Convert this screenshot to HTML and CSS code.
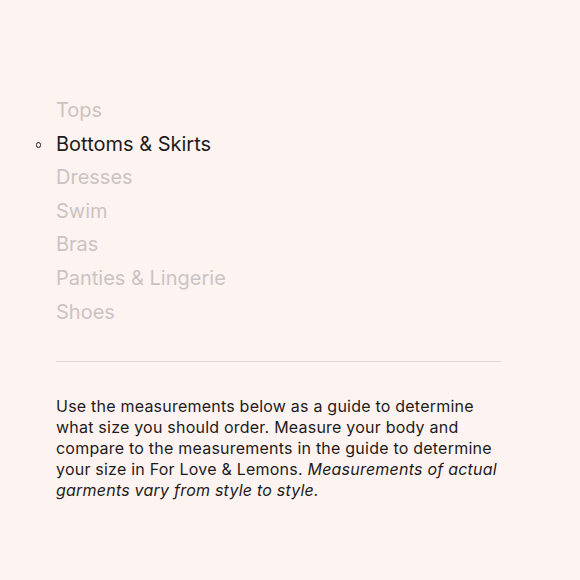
FILE: index.html
```html
<!DOCTYPE html>
<html>
<head>
<meta charset="utf-8">
<link rel="stylesheet" href="styles.css">
</head>
<body>
<div class="page">
  <ul class="cats">
    <li class="cat">Tops</li>
    <li class="cat active">Bottoms &amp; Skirts</li>
    <li class="cat">Dresses</li>
    <li class="cat">Swim</li>
    <li class="cat">Bras</li>
    <li class="cat">Panties &amp; Lingerie</li>
    <li class="cat">Shoes</li>
  </ul>
  <hr class="rule">
  <p class="intro">Use the measurements below as a guide to determine what size you should order. Measure your body and compare to the measurements in the guide to determine your size in For Love &amp; Lemons. <em>Measurements of actual garments vary from style to style.</em></p>
</div>
</body>
</html>
```
FILE: styles.css
```css
html, body {
  margin: 0;
  padding: 0;
  background: #fdf4f2;
}
body {
  font-family: Inter, "Noto Sans", sans-serif;
  color: #1f1b1b;
}
.page {
  width: 445px;
  padding: 94px 0 0 56px;
}
.cats {
  list-style: none;
  margin: 0;
  padding: 0;
}
.cat {
  position: relative;
  font-size: 20px;
  line-height: 33.6px;
  color: #cbc3c2;
}
.cat.active {
  color: #1f1b1b;
}
.cat.active::before {
  content: "";
  position: absolute;
  left: -20.3px;
  top: 14.6px;
  width: 3.4px;
  height: 3.4px;
  border: 1.5px solid #1f1b1b;
  border-radius: 50%;
}
.rule {
  margin: 32px 0 0;
  border: 0;
  border-top: 1px solid #e2d9d7;
  height: 0;
}
.intro {
  margin: 34px 0 0;
  font-size: 16px;
  line-height: 21px;
  letter-spacing: 0.22px;
}
.intro em {
  font-style: italic;
}
```
